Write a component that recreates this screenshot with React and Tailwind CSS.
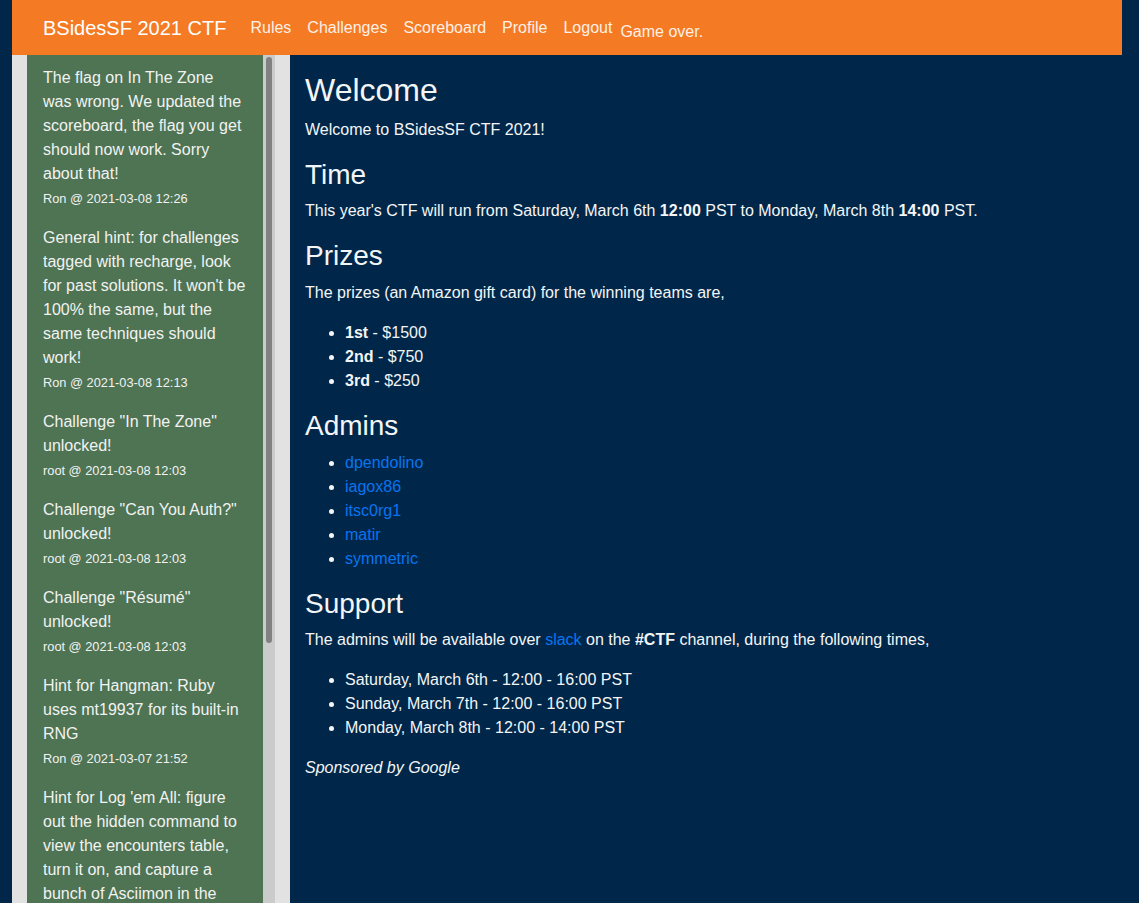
const messages = [
  {
    text: "The flag on In The Zone was wrong. We updated the scoreboard, the flag you get should now work. Sorry about that!",
    by: "Ron @ 2021-03-08 12:26",
  },
  {
    text: "General hint: for challenges tagged with recharge, look for past solutions. It won't be 100% the same, but the same techniques should work!",
    by: "Ron @ 2021-03-08 12:13",
  },
  { text: 'Challenge "In The Zone" unlocked!', by: "root @ 2021-03-08 12:03" },
  { text: 'Challenge "Can You Auth?" unlocked!', by: "root @ 2021-03-08 12:03" },
  { text: 'Challenge "Résumé" unlocked!', by: "root @ 2021-03-08 12:03" },
  {
    text: "Hint for Hangman: Ruby uses mt19937 for its built-in RNG",
    by: "Ron @ 2021-03-07 21:52",
  },
  {
    text: "Hint for Log 'em All: figure out the hidden command to view the encounters table, turn it on, and capture a bunch of Asciimon in the grass!",
    by: "Ron @ 2021-03-07 18:40",
  },
];

const navLinks = ["Rules", "Challenges", "Scoreboard", "Profile", "Logout"];
const admins = ["dpendolino", "iagox86", "itsc0rg1", "matir", "symmetric"];

export default function App() {
  return (
    <div
      className="min-h-screen bg-[#002749] text-base leading-6 text-[#f4f5f7]"
      style={{ fontFamily: '"Liberation Sans", Arial, sans-serif' }}
    >
      {/* navbar */}
      <div className="ml-[12px] w-[1110px] h-[55px] bg-[#f47a24] flex items-center pl-[31px]">
        <span className="text-[20px] leading-[30px] text-white mr-4">BSidesSF 2021 CTF</span>
        {navLinks.map((l) => (
          <a key={l} className="px-2 text-[#fdf0e6] leading-6">
            {l}
          </a>
        ))}
        <span className="mt-[8px] text-[#fdf0e6] leading-6">Game over.</span>
      </div>

      <div className="flex">
        {/* sidebar */}
        <div className="ml-[12px] w-[278px] h-[848px] bg-[#e2e2e2] px-[15px] flex overflow-hidden">
          <div className="w-[236px] bg-[#4e7453] pl-4 pt-[11px] text-[#f2f2f2] overflow-hidden">
            {messages.map((m, i) => (
              <div key={i} className="mb-4 w-[202.5px]">
                <div>{m.text}</div>
                <div>
                  <small className="text-[12.8px] leading-[1.5]">{m.by}</small>
                </div>
              </div>
            ))}
          </div>
          <div className="w-[12px] bg-[#cbcbcb] pt-[2px] px-[3px]">
            <div className="h-[586px] rounded-full bg-[#818181]"></div>
          </div>
        </div>

        {/* main */}
        <div className="flex-1 pl-[15px] pt-[16px]">
          <h2 className="text-[32px] leading-[1.2] mb-[8.5px]">Welcome</h2>
          <p className="mb-4">Welcome to BSidesSF CTF 2021!</p>

          <h3 className="text-[28px] leading-[1.2] mb-2">Time</h3>
          <p className="mb-4">
            This year's CTF will run from Saturday, March 6th <b>12:00</b> PST to Monday, March 8th{" "}
            <b>14:00</b> PST.
          </p>

          <h3 className="text-[28px] leading-[1.2] mb-2">Prizes</h3>
          <p className="mb-4">The prizes (an Amazon gift card) for the winning teams are,</p>
          <ul className="list-disc pl-10 mb-4">
            <li>
              <b>1st</b> - $1500
            </li>
            <li>
              <b>2nd</b> - $750
            </li>
            <li>
              <b>3rd</b> - $250
            </li>
          </ul>

          <h3 className="text-[28px] leading-[1.2] mb-2">Admins</h3>
          <ul className="list-disc pl-10 mb-4">
            {admins.map((a) => (
              <li key={a}>
                <a className="text-[#0a74f0]">{a}</a>
              </li>
            ))}
          </ul>

          <h3 className="text-[28px] leading-[1.2] mb-2">Support</h3>
          <p className="mb-4">
            The admins will be available over <a className="text-[#0a74f0]">slack</a> on the{" "}
            <b>#CTF</b> channel, during the following times,
          </p>
          <ul className="list-disc pl-10 mb-4">
            <li>Saturday, March 6th - 12:00 - 16:00 PST</li>
            <li>Sunday, March 7th - 12:00 - 16:00 PST</li>
            <li>Monday, March 8th - 12:00 - 14:00 PST</li>
          </ul>

          <p className="mb-4 italic">Sponsored by Google</p>
        </div>
      </div>
    </div>
  );
}
